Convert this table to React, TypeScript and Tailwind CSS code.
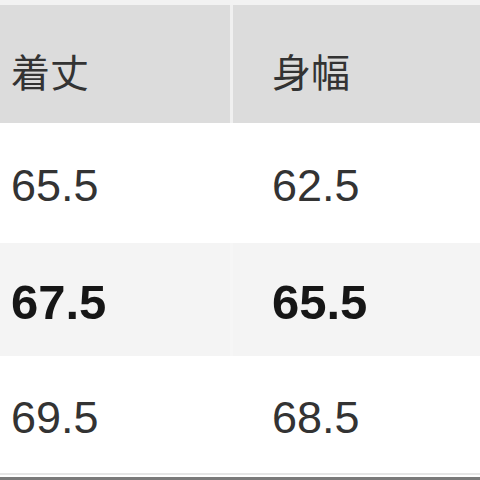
const rows = [
  { a: "65.5", b: "62.5", bg: "bg-white", bold: false, h: "h-[120px]" },
  { a: "67.5", b: "65.5", bg: "bg-[#f4f4f4]", bold: true, h: "h-[113px]" },
  { a: "69.5", b: "68.5", bg: "bg-white", bold: false, h: "h-[117px]" },
];

export default function App() {
  return (
    <div
      className="w-[480px] h-[480px] overflow-hidden bg-white flex flex-col"
      style={{ fontFamily: '"Liberation Sans", "Noto Sans CJK JP", sans-serif' }}
    >
      <div className="h-[5px] bg-[#f2f2f2]" />
      <div className="h-[118px] grid grid-cols-[230px_3px_1fr] bg-[#dcdcdc]">
        <div className="flex items-center pl-[11px] pt-[12px] text-[39px] text-[#333333]" style={{ fontFamily: '"Noto Sans CJK JP", sans-serif' }}>
          着丈
        </div>
        <div className="bg-[#f0f0f0]" />
        <div className="flex items-center pl-[39px] pt-[12px] text-[39px] text-[#333333]" style={{ fontFamily: '"Noto Sans CJK JP", sans-serif' }}>
          身幅
        </div>
      </div>
      {rows.map((r) => (
        <div key={r.a + r.b} className={`${r.h} grid grid-cols-[230px_3px_1fr] ${r.bg}`}>
          <div
            className={`flex items-center pl-[11px] pt-[6px] ${
              r.bold ? "text-[49px] font-bold text-[#161616]" : "text-[45px] text-[#333333]"
            }`}
          >
            {r.a}
          </div>
          <div className={r.bold ? "bg-[#f6f6f6]" : ""} />
          <div
            className={`flex items-center pl-[39px] pt-[6px] ${
              r.bold ? "text-[49px] font-bold text-[#161616]" : "text-[45px] text-[#333333]"
            }`}
          >
            {r.b}
          </div>
        </div>
      ))}
      <div className="h-[2px] bg-[#e6e6e6]" />
      <div className="h-[2px] bg-white" />
      <div className="flex-1 bg-[#7a7a7a]" />
    </div>
  );
}
